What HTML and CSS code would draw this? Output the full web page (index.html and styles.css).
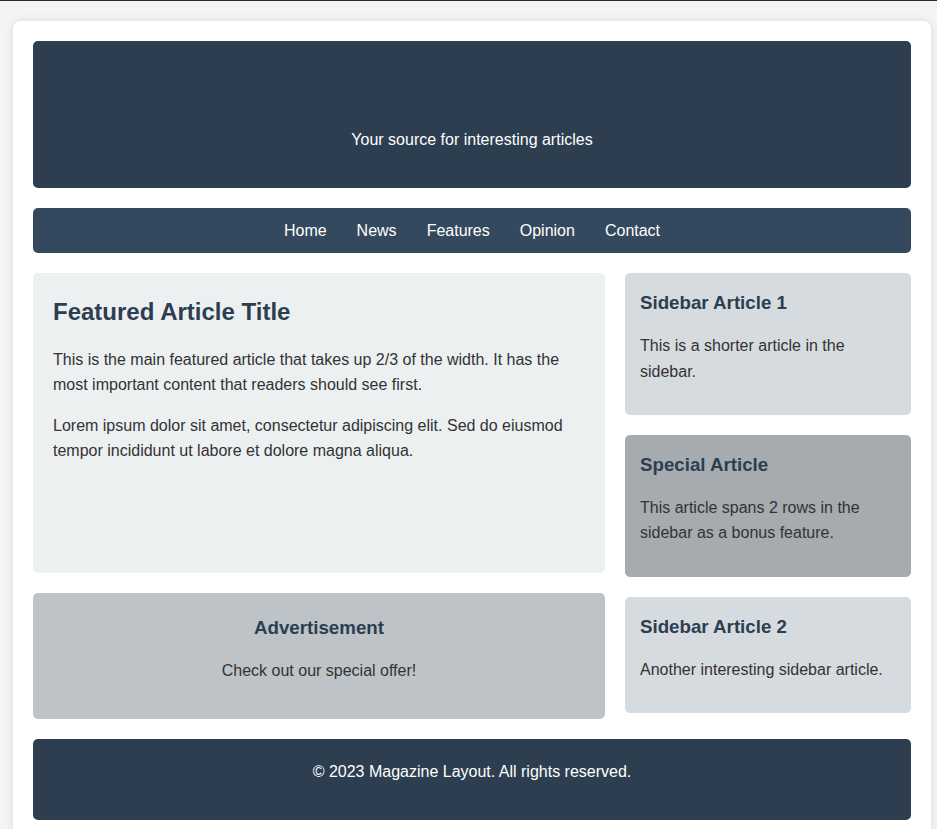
FILE: index.html
```html
<!DOCTYPE html>
<html lang="en">
<head>
<meta charset="utf-8">
<title>Magazine Layout</title>
<link rel="stylesheet" href="styles.css">
</head>
<body>
<div class="page">
  <header class="masthead">
    <p>Your source for interesting articles</p>
  </header>
  <nav class="nav">
    <a href="#">Home</a>
    <a href="#">News</a>
    <a href="#">Features</a>
    <a href="#">Opinion</a>
    <a href="#">Contact</a>
  </nav>
  <main class="layout">
    <div class="col-main">
      <article class="card featured">
        <h2>Featured Article Title</h2>
        <p>This is the main featured article that takes up 2/3 of the width. It has the most important content that readers should see first.</p>
        <p>Lorem ipsum dolor sit amet, consectetur adipiscing elit. Sed do eiusmod tempor incididunt ut labore et dolore magna aliqua.</p>
      </article>
      <aside class="card ad">
        <h3>Advertisement</h3>
        <p>Check out our special offer!</p>
      </aside>
    </div>
    <div class="col-side">
      <article class="card side">
        <h3>Sidebar Article 1</h3>
        <p>This is a shorter article in the sidebar.</p>
      </article>
      <article class="card side special">
        <h3>Special Article</h3>
        <p>This article spans 2 rows in the sidebar as a bonus feature.</p>
      </article>
      <article class="card side">
        <h3>Sidebar Article 2</h3>
        <p>Another interesting sidebar article.</p>
      </article>
    </div>
  </main>
  <footer class="footer">
    <p>&copy; 2023 Magazine Layout. All rights reserved.</p>
  </footer>
</div>
</body>
</html>
```

FILE: styles.css
```css
* { box-sizing: border-box; }

html, body { margin: 0; padding: 0; }

body {
  background: #f4f4f4;
  border-top: 1px solid #2a2a2a;
  font-family: "Liberation Sans", Arial, sans-serif;
  font-size: 16px;
  line-height: 1.6;
  color: #333;
  padding: 20px 0 0 13px;
}

.page {
  width: 918px;
  background: #fff;
  border-radius: 8px;
  box-shadow: 0 0 10px rgba(0, 0, 0, 0.1);
  padding: 20px;
}

h2, h3 {
  color: #2c3e50;
  margin: 0 0 15px;
}

h2 { font-size: 24px; }
h3 { font-size: 18.72px; }

p { margin: 0 0 15px; }

.masthead {
  background: #2c3e50;
  color: #fff;
  border-radius: 5px;
  text-align: center;
  padding: 86px 20px 20px;
}

.nav {
  margin-top: 20px;
  background: #34495e;
  border-radius: 5px;
  padding: 10px;
  display: flex;
  justify-content: center;
}

.nav a {
  color: #fff;
  text-decoration: none;
  margin: 0 15px;
}

.layout {
  margin-top: 20px;
  display: grid;
  grid-template-columns: 2fr 1fr;
  gap: 20px;
  align-items: start;
}

.col-main, .col-side {
  display: flex;
  flex-direction: column;
  gap: 20px;
}

.card {
  border-radius: 5px;
}

.featured {
  background: #ecf0f1;
  padding: 20px;
  height: 300px;
}

.ad {
  background: #bdc3c7;
  padding: 20px;
  text-align: center;
}

.side {
  background: #d6dbdf;
  padding: 15px 15px 15.6px;
}

.side.special {
  background: #a6abaf;
}

.footer {
  margin-top: 20.5px;
  background: #2c3e50;
  color: #fff;
  border-radius: 5px;
  text-align: center;
  padding: 20px;
}
```
